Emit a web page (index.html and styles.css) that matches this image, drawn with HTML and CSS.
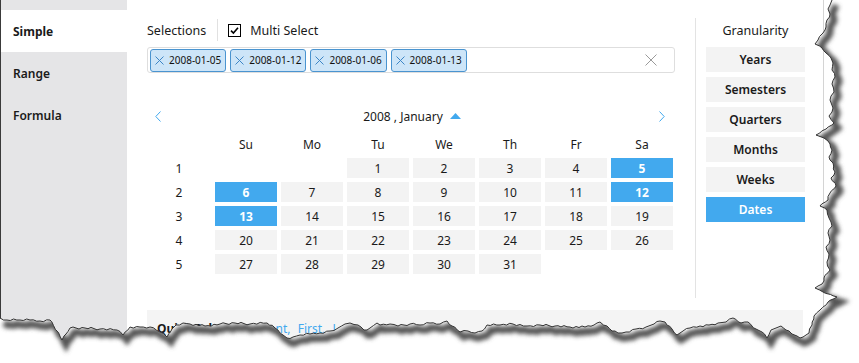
FILE: index.html
```html
<!DOCTYPE html>
<html lang="en">
<head>
    <meta charset="UTF-8">
    <title>Date Filter</title>
    <link rel="stylesheet" href="styles.css">
</head>
<body>
    <div class="window">
        <!-- Mode tabs -->
        <aside class="sidebar">
            <div class="tab active">Simple</div>
            <div class="tab">Range</div>
            <div class="tab">Formula</div>
        </aside>

        <main class="main">
            <div class="top">
                <section class="picker">
                    <div class="sel-head">
                        <span class="sel-title">Selections</span>
                        <span class="sep"></span>
                        <span class="checkbox">
                            <svg width="13" height="13" viewBox="0 0 13 13"><rect x="0.5" y="0.5" width="12" height="12" fill="#fff" stroke="#000"/><path d="M3 6.6 L5.4 9 L10 3.8" fill="none" stroke="#000" stroke-width="1.6"/></svg>
                        </span>
                        <span class="multi">Multi Select</span>
                    </div>

                    <div class="tag-box">
                        <span class="tag"><svg class="tag-x" width="9" height="9" viewBox="0 0 9 9"><path d="M0.5 0.5 L8.5 8.5 M8.5 0.5 L0.5 8.5" stroke="#3d86c6" stroke-width="1"/></svg>2008-01-05</span>
                        <span class="tag"><svg class="tag-x" width="9" height="9" viewBox="0 0 9 9"><path d="M0.5 0.5 L8.5 8.5 M8.5 0.5 L0.5 8.5" stroke="#3d86c6" stroke-width="1"/></svg>2008-01-12</span>
                        <span class="tag"><svg class="tag-x" width="9" height="9" viewBox="0 0 9 9"><path d="M0.5 0.5 L8.5 8.5 M8.5 0.5 L0.5 8.5" stroke="#3d86c6" stroke-width="1"/></svg>2008-01-06</span>
                        <span class="tag"><svg class="tag-x" width="9" height="9" viewBox="0 0 9 9"><path d="M0.5 0.5 L8.5 8.5 M8.5 0.5 L0.5 8.5" stroke="#3d86c6" stroke-width="1"/></svg>2008-01-13</span>
                        <svg class="clear" width="12" height="12" viewBox="0 0 12 12"><path d="M0.5 0.5 L11.5 11.5 M11.5 0.5 L0.5 11.5" stroke="#9a9a9a" stroke-width="1"/></svg>
                    </div>

                    <div class="cal-nav">
                        <svg width="6" height="11" viewBox="0 0 6 11"><path d="M5.5 0.5 L0.8 5.5 L5.5 10.5" fill="none" stroke="#42a9ee" stroke-width="1"/></svg>
                        <span class="cal-title">2008 , January
                            <svg width="11" height="6" viewBox="0 0 11 6"><path d="M0 6 L5.5 0 L11 6 Z" fill="#42a9ee"/></svg>
                        </span>
                        <svg width="6" height="11" viewBox="0 0 6 11"><path d="M0.5 0.5 L5.2 5.5 L0.5 10.5" fill="none" stroke="#42a9ee" stroke-width="1"/></svg>
                    </div>

                    <div class="cal-grid">
                        <span></span>
                        <span class="dow">Su</span><span class="dow">Mo</span><span class="dow">Tu</span><span class="dow">We</span><span class="dow">Th</span><span class="dow">Fr</span><span class="dow">Sa</span>

                        <span class="wk">1</span>
                        <span></span><span></span>
                        <span class="day">1</span><span class="day">2</span><span class="day">3</span><span class="day">4</span><span class="day sel">5</span>

                        <span class="wk">2</span>
                        <span class="day sel">6</span><span class="day">7</span><span class="day">8</span><span class="day">9</span><span class="day">10</span><span class="day">11</span><span class="day sel">12</span>

                        <span class="wk">3</span>
                        <span class="day sel">13</span><span class="day">14</span><span class="day">15</span><span class="day">16</span><span class="day">17</span><span class="day">18</span><span class="day">19</span>

                        <span class="wk">4</span>
                        <span class="day">20</span><span class="day">21</span><span class="day">22</span><span class="day">23</span><span class="day">24</span><span class="day">25</span><span class="day">26</span>

                        <span class="wk">5</span>
                        <span class="day">27</span><span class="day">28</span><span class="day">29</span><span class="day">30</span><span class="day">31</span>
                    </div>
                </section>

                <!-- Granularity -->
                <section class="gran">
                    <div class="gran-title">Granularity</div>
                    <div class="gran-btn">Years</div>
                    <div class="gran-btn">Semesters</div>
                    <div class="gran-btn">Quarters</div>
                    <div class="gran-btn">Months</div>
                    <div class="gran-btn">Weeks</div>
                    <div class="gran-btn active">Dates</div>
                </section>
            </div>

            <div class="quick">
                <b>Quick Select :</b>
                <a>Current,</a>
                <a>First,</a>
                <a>Last</a>
            </div>
        </main>
    </div>

    <!-- torn paper edge drawn over the screenshot -->
    <svg class="torn" width="859" height="363" viewBox="0 0 859 363">
        <defs>
            <filter id="blur" x="-10%" y="-10%" width="120%" height="120%">
                <feGaussianBlur stdDeviation="2.2"/>
            </filter>
            <clipPath id="outside">
                <path id="outer" d=""/>
            </clipPath>
        </defs>
        <path class="outer-fill" d=""/>
        <g clip-path="url(#outside)">
            <path class="edge-shadow" d=""/>
        </g>
        <path class="edge-line" d=""/>
    </svg>

    <script>
        // jagged edge: down the right side, then back along the bottom
        const edge = [
            [832,0],[830,5],[828,9],[830,14],[827,20],[826,27],[823,33],[818,40],[815,44],[822,48],[826,53],[831,58],[833,63],[832,70],[835,77],[832,84],[834,92],[830,100],[833,108],[829,116],[834,123],[826,129],[816,135],[824,138],[830,144],[832,150],[829,157],[833,163],[835,172],[831,178],[836,186],[830,193],[828,200],[820,206],[827,210],[829,218],[832,226],[828,233],[830,240],[826,247],[829,254],[827,262],[830,270],[824,278],[822,284],[815,288],[823,292],[837,297],[828,302],[820,310],[814,316],[812,325],[809,333],[803,337],[800,338],
            [797,336],[792,334],[786,330],[781,326],[776,328],[771,330],[767,338],[762,332],[756,329],[748,322],[741,323],[733,318],[726,322],[718,323],[709,325],[700,326],[690,328],[683,331],[677,335],[672,329],[665,322],[660,321],[654,324],[646,327],[636,329],[626,332],[618,333],[612,331],[607,326],[600,322],[594,325],[585,327],[570,327],[555,326],[540,325],[527,326],[513,324],[500,325],[487,325],[482,331],[475,333],[468,331],[460,332],[452,326],[447,321],[440,324],[430,323],[420,325],[410,324],[398,326],[390,324],[380,325],[377,323],[370,328],[364,330],[358,325],[350,323],[345,324],[338,328],[330,331],[320,333],[310,334],[300,335],[293,337],[287,338],[283,335],[275,328],[267,323],[250,324],[235,323],[220,324],[205,326],[190,324],[183,323],[176,325],[172,329],[167,337],[160,332],[150,327],[140,327],[130,327],[123,335],[117,330],[100,329],[85,328],[70,328],[66,334],[62,340],[57,331],[50,320],[40,321],[30,320],[20,320],[7,320],[0,318]
        ];

        // add small wiggle between points so it reads as torn paper
        const pts = [];
        for (let i = 0; i < edge.length - 1; i++) {
            const [x1, y1] = edge[i];
            const [x2, y2] = edge[i + 1];
            pts.push([x1, y1]);
            const steps = Math.max(1, Math.floor(Math.hypot(x2 - x1, y2 - y1) / 3));
            for (let s = 1; s < steps; s++) {
                const t = s / steps;
                const j = ((i * 7 + s * 13) % 5 - 2) * 0.5;
                pts.push([x1 + (x2 - x1) * t + (i < 55 ? j : 0), y1 + (y2 - y1) * t + (i >= 55 ? j : 0)]);
            }
        }
        pts.push(edge[edge.length - 1]);

        const line = 'M' + pts.map(p => p[0].toFixed(1) + ' ' + p[1].toFixed(1)).join(' L');
        const outer = line + ' L0 363 L859 363 L859 0 Z';
        const shadow = 'M' + pts.map(p => (p[0] + 4).toFixed(1) + ' ' + (p[1] + 5).toFixed(1)).join(' L');

        document.getElementById('outer').setAttribute('d', outer);
        document.querySelector('.outer-fill').setAttribute('d', outer);
        document.querySelector('.edge-shadow').setAttribute('d', shadow);
        document.querySelector('.edge-line').setAttribute('d', line);
    </script>
</body>
</html>
```

FILE: styles.css
```css
body {
    margin: 0;
    position: relative;
    background-color: #ffffff;
    font-family: "Noto Sans", "Open Sans", sans-serif;
    font-size: 12px;
    color: #1a1a1a;
    overflow: hidden;
    height: 363px;
}

.window {
    display: flex;
    width: 824px;
    height: 363px;
    box-sizing: border-box;
    border-left: 1px solid #3a3a3a;
    border-right: 1px solid #d4d4d4;
    background-color: #ffffff;
}

/* Sidebar tabs */
.sidebar {
    width: 126px;
    flex-shrink: 0;
    background-color: #e5e5e7;
    padding-top: 10px;
}

.tab {
    height: 42px;
    display: flex;
    align-items: center;
    padding-left: 12px;
    font-size: 12px;
    font-weight: 600;
}

.tab.active {
    background-color: #ffffff;
    font-weight: 700;
}

.main {
    flex: 1;
    padding: 18px 17px 0 20px;
}

.top {
    display: flex;
    height: 280px;
}

.picker {
    width: 528px;
    padding-right: 20px;
}

/* Selections header */
.sel-head {
    height: 24px;
    display: flex;
    align-items: center;
}

.sel-title {
    font-size: 12.5px;
}

.sep {
    width: 1px;
    height: 22px;
    background-color: #e1e1e1;
    margin: 0 10px 0 11px;
}

.checkbox {
    display: flex;
}

.multi {
    margin-left: 9px;
    font-size: 12.5px;
}

.tag-box {
    margin-top: 5px;
    height: 26px;
    box-sizing: border-box;
    border: 1px solid #dedede;
    border-radius: 3px;
    display: flex;
    align-items: center;
    gap: 4px;
    padding: 0 2px;
}

.tag {
    height: 23px;
    box-sizing: border-box;
    display: flex;
    align-items: center;
    gap: 5px;
    padding: 0 4px 0 4px;
    background-color: #cde5f8;
    border: 1px solid #4a94d0;
    border-radius: 3px;
    font-size: 10px;
    color: #111;
}

.clear {
    margin-left: auto;
    margin-right: 15px;
}

/* Calendar */
.cal-nav {
    margin-top: 33px;
    height: 20px;
    display: flex;
    align-items: center;
    justify-content: space-between;
    padding: 0 10px 0 8px;
}

.cal-title {
    display: flex;
    align-items: center;
    gap: 7px;
    font-size: 12px;
    margin-left: 4px;
}

.cal-grid {
    margin-top: 8px;
    display: grid;
    grid-template-columns: 64px repeat(7, 62px);
    grid-auto-rows: 20px;
    gap: 4px;
}

.cal-grid span {
    display: flex;
    align-items: center;
    justify-content: center;
}

.day {
    background-color: #f3f3f3;
}

.day.sel {
    background-color: #42a9ee;
    color: #ffffff;
    font-weight: 700;
}

/* Granularity */
.gran {
    border-left: 1px solid #e3e3e3;
    padding-left: 10px;
    width: 99px;
}

.gran-title {
    height: 24px;
    display: flex;
    align-items: center;
    justify-content: center;
    font-size: 12.5px;
    margin-bottom: 5px;
}

.gran-btn {
    height: 25px;
    margin-bottom: 5px;
    display: flex;
    align-items: center;
    justify-content: center;
    background-color: #f3f3f3;
    font-weight: 600;
}

.gran-btn.active {
    background-color: #42a9ee;
    color: #ffffff;
}

.quick {
    margin-top: 12px;
    width: 656px;
    height: 40px;
    box-sizing: border-box;
    background-color: #f4f4f4;
    padding: 10px 10px;
}

.quick a {
    color: #42a9ee;
    margin-left: 4px;
}

/* Torn edge overlay */
.torn {
    position: absolute;
    top: 0;
    left: 0;
}

.outer-fill {
    fill: #ffffff;
}

.edge-shadow {
    fill: none;
    stroke: #555555;
    stroke-width: 7;
    filter: url(#blur);
}

.edge-line {
    fill: none;
    stroke: #333333;
    stroke-width: 1;
}
```
